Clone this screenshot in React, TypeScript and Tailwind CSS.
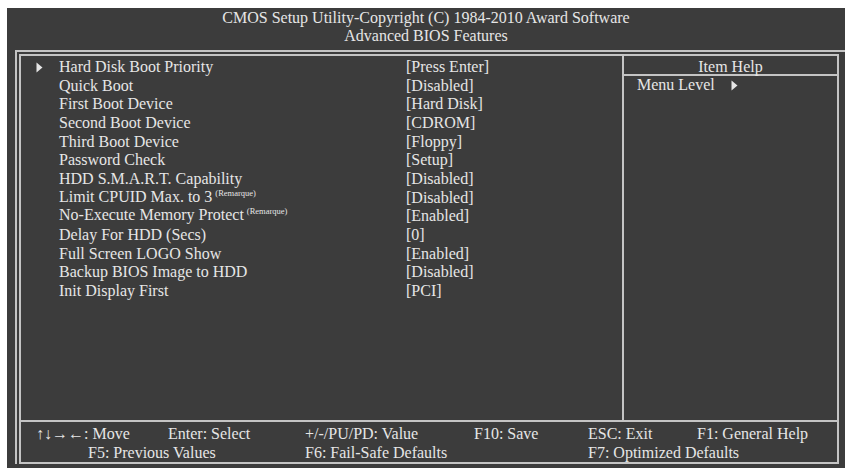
const rows: { label: string; note?: boolean; value: string; arrow?: boolean }[] = [
  { label: 'Hard Disk Boot Priority', value: '[Press Enter]', arrow: true },
  { label: 'Quick Boot', value: '[Disabled]' },
  { label: 'First Boot Device', value: '[Hard Disk]' },
  { label: 'Second Boot Device', value: '[CDROM]' },
  { label: 'Third Boot Device', value: '[Floppy]' },
  { label: 'Password Check', value: '[Setup]' },
  { label: 'HDD S.M.A.R.T. Capability', value: '[Disabled]' },
  { label: 'Limit CPUID Max. to 3', note: true, value: '[Disabled]' },
  { label: 'No-Execute Memory Protect', note: true, value: '[Enabled]' },
  { label: 'Delay For HDD (Secs)', value: '[0]' },
  { label: 'Full Screen LOGO Show', value: '[Enabled]' },
  { label: 'Backup BIOS Image to HDD', value: '[Disabled]' },
  { label: 'Init Display First', value: '[PCI]' },
];

function Arrow() {
  return (
    <svg width="7" height="11" viewBox="0 0 7 11" className="inline-block">
      <path d="M0.5 0.5 L6.5 5.5 L0.5 10.5 Z" fill="#e6e6e6" />
    </svg>
  );
}

export default function App() {
  return (
    <div
      className="w-[845px] h-[468px] bg-white pl-[7px] pt-[8px] overflow-hidden"
      style={{ fontFamily: '"Liberation Serif", "Times New Roman", serif' }}
    >
      <div className="h-[460px] bg-[#3c3c3c] text-[#e6e6e6] text-[16px] leading-[18.67px]">
        {/* Header */}
        <div className="h-[42px] pt-[1px] text-center leading-[18px]">
          <div>CMOS Setup Utility-Copyright (C) 1984-2010 Award Software</div>
          <div>Advanced BIOS Features</div>
        </div>

        {/* Double frame */}
        <div className="ml-[8px] border-l-2 border-t-2 border-[#c4c4c4] pl-[2px] pt-[2px]">
          <div className="w-[820px] h-[410px] border-2 border-[#c4c4c4] flex flex-col">
            <div className="flex flex-1">
              {/* Settings list */}
              <div className="w-[603px] border-r-2 border-[#c4c4c4] pt-[2px]">
                {rows.map((r) => (
                  <div key={r.label} className="flex h-[18.67px] items-center">
                    <div className="w-[38px] pl-[15px] flex items-center">
                      {r.arrow && <Arrow />}
                    </div>
                    <div className="w-[347px] whitespace-nowrap">
                      {r.label}
                      {r.note && (
                        <span className="text-[8.5px] ml-[3px] relative top-[-6px]">(Remarque)</span>
                      )}
                    </div>
                    <div>{r.value}</div>
                  </div>
                ))}
              </div>

              {/* Item help */}
              <div className="flex-1">
                <div className="h-[20px] border-b-2 border-[#c4c4c4] text-center leading-[19px] pt-[1px]">
                  Item Help
                </div>
                <div className="flex items-center pl-[13px] h-[19px]">
                  <span>Menu Level</span>
                  <span className="ml-[16px] flex items-center">
                    <Arrow />
                  </span>
                </div>
              </div>
            </div>

            {/* Footer keys */}
            <div className="h-[42px] border-t-2 border-[#c4c4c4] pt-[3px] whitespace-nowrap">
              <div className="flex pl-[15px]">
                <span className="w-[132px]">↑↓→←: Move</span>
                <span className="w-[137px]">Enter: Select</span>
                <span className="w-[169px]">+/-/PU/PD: Value</span>
                <span className="w-[114px]">F10: Save</span>
                <span className="w-[109px]">ESC: Exit</span>
                <span>F1: General Help</span>
              </div>
              <div className="flex pl-[67px]">
                <span className="w-[217px]">F5: Previous Values</span>
                <span className="w-[283px]">F6: Fail-Safe Defaults</span>
                <span>F7: Optimized Defaults</span>
              </div>
            </div>
          </div>
        </div>
      </div>
    </div>
  );
}
